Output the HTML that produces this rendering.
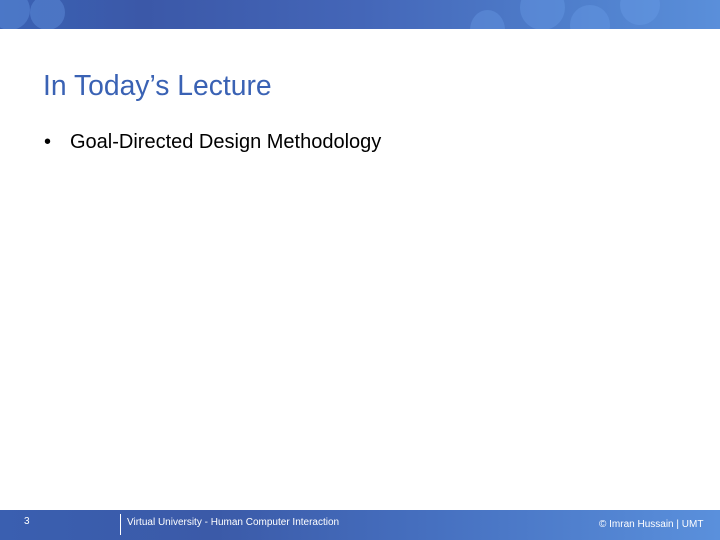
<!DOCTYPE html>
<html><head><style>
body{margin:0;width:720px;height:540px;position:relative;background:#fff;font-family:"Liberation Sans",sans-serif;overflow:hidden}
.top{position:absolute;left:0;top:0;width:720px;height:29px;overflow:hidden;background:linear-gradient(90deg,#3a62b4 0%,#3b58a8 20%,#4466b8 50%,#4f7fcc 80%,#5a8fda 100%)}
.bot{position:absolute;left:0;top:510px;width:720px;height:30px;overflow:hidden;background:linear-gradient(90deg,#3a5fb0 0%,#3b5aa8 30%,#4670c0 60%,#5a90dc 100%)}
.c{position:absolute;border-radius:50%;background:rgba(110,160,235,.35)}
</style></head><body>
<div class="top">
<div class="c" style="left:-10px;top:-10px;width:40px;height:40px"></div>
<div class="c" style="left:30px;top:-5px;width:35px;height:35px"></div>
<div class="c" style="left:470px;top:10px;width:35px;height:40px"></div>
<div class="c" style="left:520px;top:-15px;width:45px;height:45px"></div>
<div class="c" style="left:570px;top:5px;width:40px;height:40px"></div>
<div class="c" style="left:620px;top:-15px;width:40px;height:40px"></div>
</div>
<div style="position:absolute;left:43px;top:69px;font-size:28.3px;color:#3a62b4">In Today’s Lecture</div>
<div style="position:absolute;left:44px;top:131px;font-size:20px;color:#000">•</div>
<div style="position:absolute;left:70px;top:131px;font-size:20px;color:#000">Goal-Directed Design Methodology</div>
<div class="bot">
<div style="position:absolute;left:24px;top:6px;font-size:10px;color:#fff">3</div>
<div style="position:absolute;left:120px;top:4px;width:1px;height:21px;background:#fff"></div>
<div style="position:absolute;left:127px;top:7px;font-size:10px;color:#fff">Virtual University - Human Computer Interaction</div>
<div style="position:absolute;left:599px;top:9px;font-size:10px;color:#fff">© Imran Hussain | UMT</div>
</div>
</body></html>
